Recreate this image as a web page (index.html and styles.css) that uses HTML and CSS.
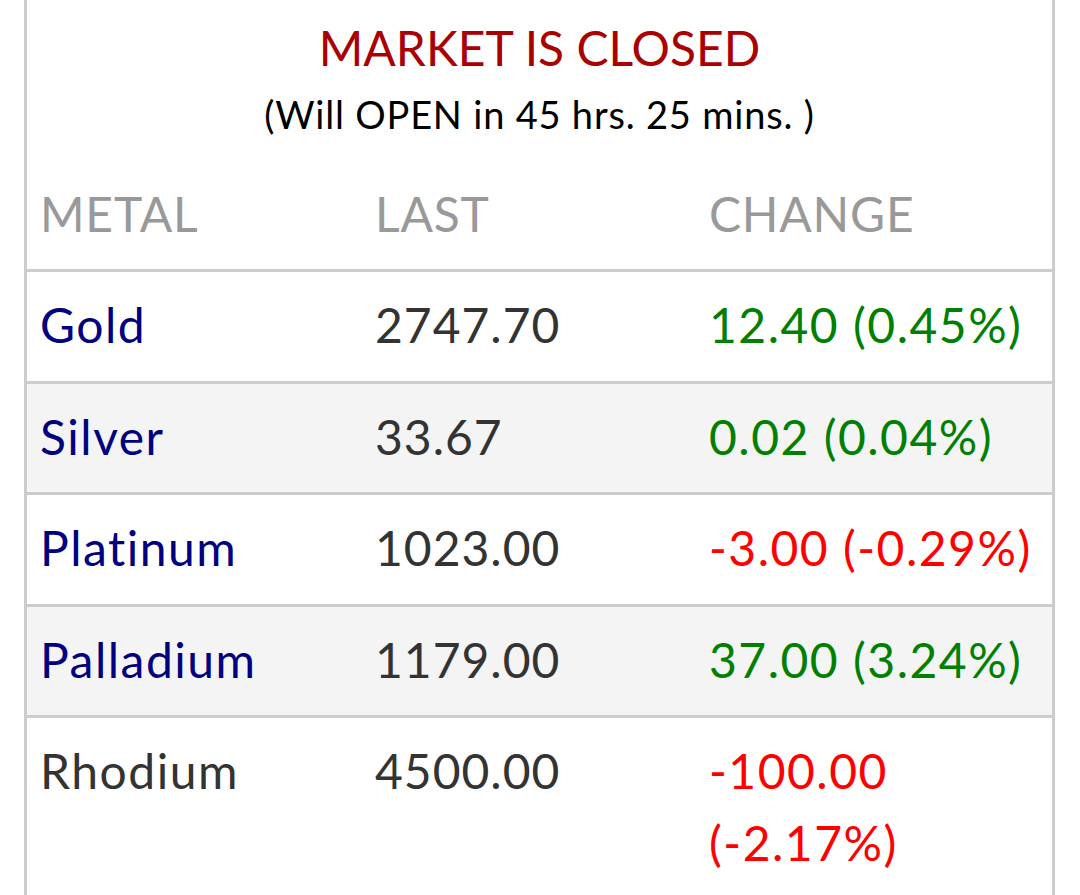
FILE: index.html
```html
<!DOCTYPE html>
<html>
<head>
<meta charset="utf-8">
<link rel="stylesheet" href="styles.css">
</head>
<body>
<div class="panel">
  <div class="status">
    <div class="status-title">MARKET IS CLOSED</div>
    <div class="status-sub">(Will OPEN in 45 hrs. 25 mins. )</div>
  </div>
  <table class="prices">
    <colgroup>
      <col class="c1"><col class="c2"><col class="c3">
    </colgroup>
    <thead>
      <tr><th>METAL</th><th>LAST</th><th>CHANGE</th></tr>
    </thead>
    <tbody>
      <tr><td class="metal link">Gold</td><td class="last">2747.70</td><td class="up">12.40 (0.45%)</td></tr>
      <tr><td class="metal link">Silver</td><td class="last">33.67</td><td class="up">0.02 (0.04%)</td></tr>
      <tr><td class="metal link">Platinum</td><td class="last">1023.00</td><td class="down">-3.00 (-0.29%)</td></tr>
      <tr><td class="metal link">Palladium</td><td class="last">1179.00</td><td class="up">37.00 (3.24%)</td></tr>
      <tr><td class="metal">Rhodium</td><td class="last">4500.00</td><td class="down">-100.00 (-2.17%)</td></tr>
    </tbody>
  </table>
</div>
</body>
</html>
```
FILE: styles.css
```css
html, body {
  margin: 0;
  padding: 0;
  background: #fff;
}
body {
  font-family: Lato, "Liberation Sans", sans-serif;
  color: #333;
}
.panel {
  margin-left: 24px;
  width: 1025px;
  border-left: 3px solid #ccc;
  border-right: 3px solid #ccc;
  min-height: 895px;
}
.status {
  text-align: center;
  padding-top: 16px;
}
.status-title {
  color: #aa0000;
  font-size: 48px;
  line-height: 64px;
}
.status-sub {
  color: #000;
  font-size: 38px;
  line-height: 56px;
  letter-spacing: 0.8px;
  margin-top: 6px;
}
.prices {
  width: 100%;
  border-collapse: collapse;
  margin-top: 16px;
}
.c1 { width: 335px; }
.c2 { width: 334px; }
.prices th, .prices td {
  text-align: left;
  vertical-align: top;
  font-size: 48px;
  line-height: 72px;
  font-weight: normal;
  letter-spacing: 1.5px;
  padding: 17px 13px 19.5px 13px;
}
.prices td.last {
  letter-spacing: 1px;
}
.prices th {
  color: #999;
  letter-spacing: 0.8px;
  padding-top: 20px;
  padding-bottom: 19px;
}
.prices tbody tr {
  border-top: 3px solid #ccc;
}
.prices tbody tr:nth-child(even) {
  background: #f4f4f4;
}
.metal { color: #333; }
.metal.link { color: #000080; }
.last { color: #333; }
.up { color: #008000; }
.down { color: #ff0000; }
```
